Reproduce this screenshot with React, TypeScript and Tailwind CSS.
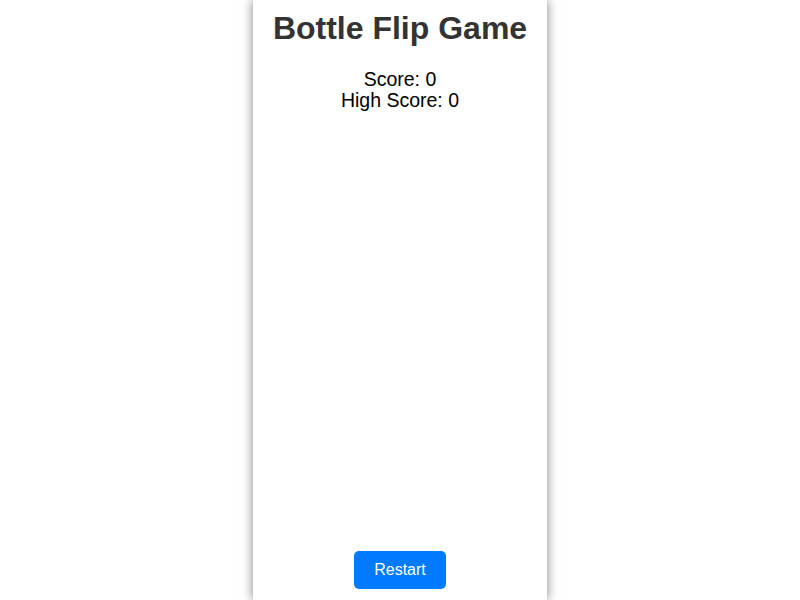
import React, { useState } from 'react';

const App: React.FC = () => {
  const [score, setScore] = useState(0);
  const [highScore, setHighScore] = useState(0);

  const handleRestart = () => {
    if (score > highScore) setHighScore(score);
    setScore(0);
  };

  return (
    <div className="h-screen w-full bg-white font-['Liberation_Sans',Arial,sans-serif]">
      <div className="mx-auto flex h-full w-[294px] flex-col items-center bg-white shadow-[0_0_10px_rgba(0,0,0,0.5)]">
        <h1 className="mt-[10px] text-[32px] font-bold leading-[36.8px] text-[#333]">Bottle Flip Game</h1>
        <div className="mt-[22px] text-center text-[19.5px] leading-[21px] text-black">
          <div>Score: {score}</div>
          <div>High Score: {highScore}</div>
        </div>
        <div className="flex-1" />
        <button
          type="button"
          onClick={handleRestart}
          className="mb-[11px] rounded-[5px] bg-[#007bff] px-5 py-[10px] text-[16px] leading-[18.4px] text-white"
        >
          Restart
        </button>
      </div>
    </div>
  );
};

export default App;
